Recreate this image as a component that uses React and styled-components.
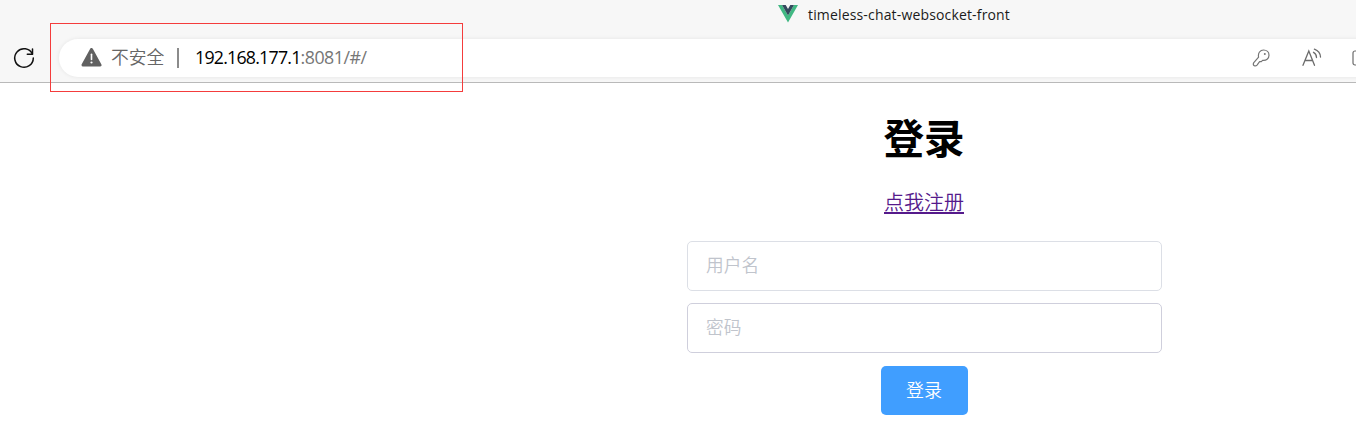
import React from "react";
import styled, { createGlobalStyle } from "styled-components";

const GlobalStyle = createGlobalStyle`
  * { box-sizing: border-box; }
  body {
    margin: 0;
    background: #fff;
    overflow: hidden;
    font-family: "Open Sans", "Noto Sans CJK SC", sans-serif;
  }
`;

const Window = styled.div`
  position: relative;
  height: 439px;
  overflow: hidden;
`;

const Chrome = styled.header`
  height: 83px;
  background: #f7f7f7;
  border-bottom: 1px solid #b9b9b9;
`;

const TabStrip = styled.div`
  height: 39px;
  padding: 4px 0 0 778px;
  display: flex;
  align-items: flex-start;
  gap: 10px;
`;

const TabTitle = styled.span`
  padding-top: 1px;
  font-size: 14px;
  line-height: 20px;
  letter-spacing: 0.16px;
  color: #1b1b1b;
  white-space: nowrap;
`;

const Toolbar = styled.div`
  display: flex;
  height: 38px;
  padding-left: 12px;
  align-items: center;
`;

const ReloadIcon = styled.svg`
  flex: none;
  margin-right: 23px;
`;

const AddressBar = styled.div`
  flex: none;
  width: 1340px;
  height: 38px;
  padding-left: 22px;
  display: flex;
  align-items: center;
  background: #fff;
  border-radius: 19px;
  box-shadow: 0 0 4px rgba(0, 0, 0, 0.08);
  white-space: nowrap;
`;

const Security = styled.span`
  width: 53px;
  margin-left: 9px;
  padding-bottom: 2px;
  font-size: 17.8px;
  line-height: 36px;
  font-weight: 350;
  color: #666;
`;

const Divider = styled.span`
  width: 2px;
  height: 20px;
  margin: 0 16px 0 13px;
  background: #8b8b8b;
`;

const Url = styled.span`
  width: 1057px;
  padding-bottom: 2px;
  font-size: 17.8px;
  line-height: 36px;
  letter-spacing: -0.78px;
  color: #000;
`;

const UrlRest = styled.span`
  letter-spacing: -0.5px;
  color: #767676;
`;

const ToolIcon = styled.svg`
  flex: none;
  margin-right: ${(p) => p.$gap || 0}px;
`;

const Page = styled.main`
  width: 475px;
  margin-left: 687px;
  padding-top: 27px;
  display: flex;
  flex-direction: column;
  align-items: center;
`;

const Title = styled.h1`
  margin: 0 1px 0 0;
  font-size: 40.5px;
  line-height: 58px;
  font-weight: 700;
  color: #000;
`;

const RegisterLink = styled.a`
  margin: 20px 1px 23px 0;
  font-size: 20px;
  line-height: 30px;
  font-weight: 350;
  color: #551a8b;
  text-decoration: underline;
  text-decoration-thickness: 2px;
  text-underline-offset: 2px;
`;

const Field = styled.input`
  width: 475px;
  height: 50px;
  margin-bottom: 12px;
  padding: 0 18px 2px;
  border: 1px solid ${(p) => p.$border};
  border-radius: 5px;
  background: #fff;
  font: 350 17.7px "Open Sans", "Noto Sans CJK SC", sans-serif;
  outline: none;
  &::placeholder {
    color: #c0c4cc;
    opacity: 1;
  }
`;

const LoginButton = styled.button`
  width: 87px;
  height: 49px;
  margin-top: 1px;
  padding: 0 1px 3px 0;
  border: 0;
  border-radius: 5px;
  background: #409eff;
  color: #fff;
  font: 350 18px "Open Sans", "Noto Sans CJK SC", sans-serif;
`;

const Highlight = styled.div`
  position: absolute;
  left: 50px;
  top: 23px;
  width: 413px;
  height: 69px;
  border: 1px solid #f43c3c;
  pointer-events: none;
`;

export default function App() {
  return (
    <Window>
      <GlobalStyle />
      <Chrome>
        <TabStrip>
          <svg width="20" height="20" viewBox="0 0 20 20">
            <path d="M0 1h4l6 10.400 6-10.400h4L10 18.500z" fill="#41b883" />
            <path d="M4 1h3.700L10 5l2.300-4H16L10 11.400z" fill="#34495e" />
          </svg>
          <TabTitle>timeless-chat-websocket-front</TabTitle>
        </TabStrip>
        <Toolbar>
          <ReloadIcon width="24" height="24" viewBox="0 0 24 24" fill="none" stroke="#111" strokeWidth="1.5" strokeLinecap="round" strokeLinejoin="round">
            <path d="M20.400 8A9.300 9.300 0 1 0 21.300 12" />
            <path d="M20.500 3v5.200h-5.200" />
          </ReloadIcon>
          <AddressBar>
            <ToolIcon width="21" height="20" viewBox="0 0 21 20">
              <path d="M10.500 1.500 19 17H2z" fill="#616161" stroke="#616161" strokeWidth="3" strokeLinejoin="round" />
              <path d="M10.500 6.300v5.200" stroke="#fff" strokeWidth="1.600" strokeLinecap="round" />
              <circle cx="10.500" cy="14.500" r="1.100" fill="#fff" />
            </ToolIcon>
            <Security>不安全</Security>
            <Divider />
            <Url>
              192.168.177.1<UrlRest>:8081/#/</UrlRest>
            </Url>
            <ToolIcon $gap={32} width="18" height="18" viewBox="0 0 18 18" fill="none" stroke="#757575" strokeWidth="1.200" strokeLinejoin="round">
              <path d="M6.600 8.100C5.700 4 8.200 1 11.600 1 14.700 1 17 3.200 17 6.200c0 3.300-2.900 5.700-6.400 5.100L9.300 12.600H7.600L5 16.100Q3.800 17.400 2.300 16.700 0.600 15.600 1.800 13.600z" />
              <circle cx="12.800" cy="5" r="1" fill="#757575" stroke="none" />
            </ToolIcon>
            <ToolIcon $gap={30} width="20" height="20" viewBox="0 0 20 20" fill="none" stroke="#6c6c6c" strokeWidth="1.300" strokeLinecap="round">
              <path d="M1 17.300 6.800 3 12.500 17.300M3 12.500h7.500" />
              <path d="M11.500 4.300Q14.400 5.700 14.500 9.500M12.400 1.200Q18.200 3.400 18.500 9" />
            </ToolIcon>
            <ToolIcon width="18" height="18" viewBox="0 0 18 18" fill="none" stroke="#6c6c6c" strokeWidth="1.200">
              <rect x="1" y="2" width="16" height="14" rx="2" />
            </ToolIcon>
          </AddressBar>
        </Toolbar>
      </Chrome>
      <Page>
        <Title>登录</Title>
        <RegisterLink href="#/register">点我注册</RegisterLink>
        <Field $border="#dcdfe6" placeholder="用户名" />
        <Field $border="#cfcfdc" type="password" placeholder="密码" />
        <LoginButton type="button">登录</LoginButton>
      </Page>
      <Highlight />
    </Window>
  );
}
